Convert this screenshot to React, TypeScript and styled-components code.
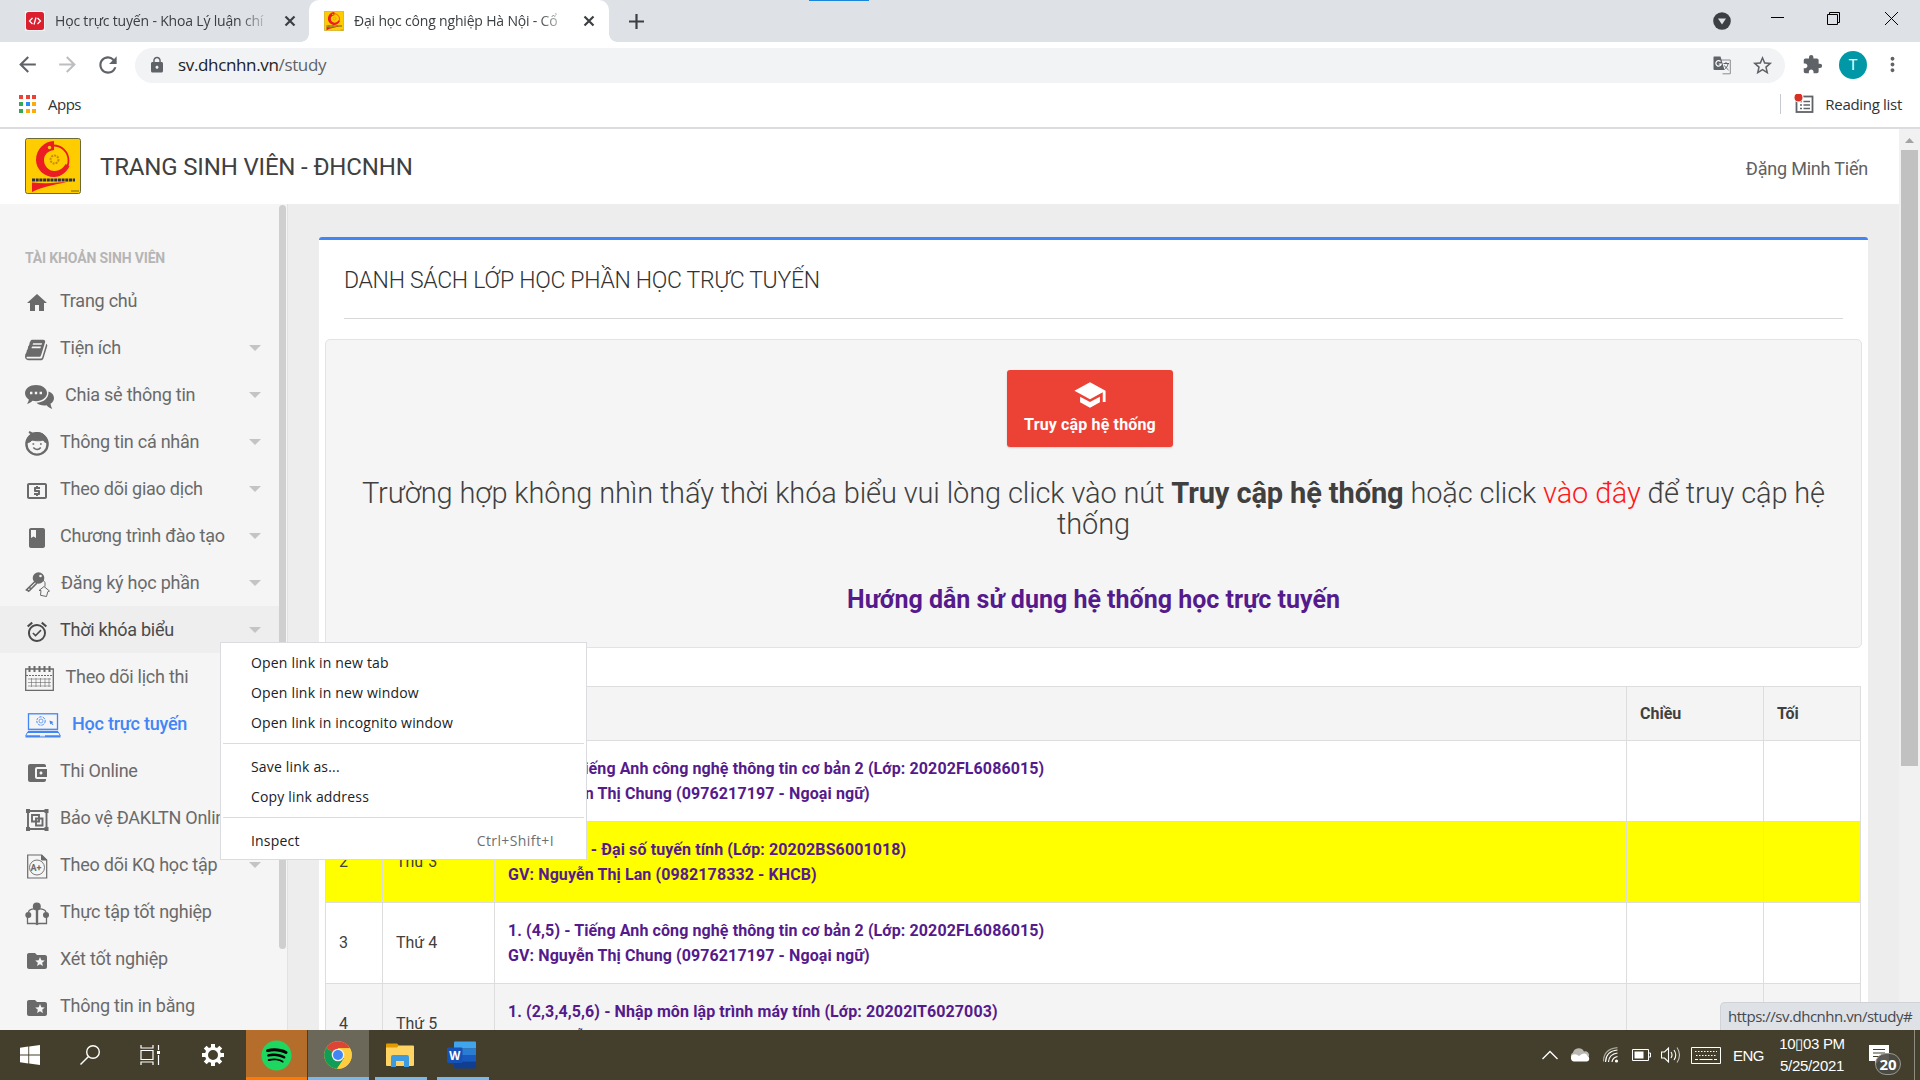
import React from "react";
import styled, { createGlobalStyle } from "styled-components";
import { MdHome, MdLocalAtm, MdBook, MdAlarmOn, MdFolderSpecial, MdSchool, MdExtension, MdStarBorder, MdLock, MdRefresh, MdArrowBack, MdArrowForward, MdMoreVert, MdAccountBalanceWallet } from "react-icons/md";
import { FaSpotify } from "react-icons/fa";

const chromeFont = `"Segoe UI", "Open Sans", "Noto Sans", sans-serif`;
const pageFont = `Roboto, "Noto Sans", sans-serif`;

const GlobalStyle = createGlobalStyle`
  * { box-sizing: border-box; }
  body { margin: 0; overflow: hidden; background: #fff; }
  svg { display: block; flex: none; }
`;

const Screen = styled.div`
  position: relative;
  display: flex;
  flex-direction: column;
  width: 1920px;
  height: 1080px;
  overflow: hidden;
  font-family: ${chromeFont};
  color: #3c4043;
`;

/* ---------- Browser chrome ---------- */
const TabStrip = styled.div`
  display: flex;
  height: 42px;
  flex: none;
  background: #dee1e6;
`;
const Tab = styled.div<{ $active?: boolean; $width: number; $pad: number }>`
  position: relative;
  display: flex;
  align-items: center;
  width: ${(p) => p.$width}px;
  height: 42px;
  padding: 0 0 1px ${(p) => p.$pad}px;
  background: ${(p) => (p.$active ? "#fff" : "transparent")};
  border-radius: 10px 10px 0 0;
  ${(p) =>
    p.$active &&
    `&::before, &::after {
      content: ""; position: absolute; bottom: 0; width: 8px; height: 8px;
    }
    &::before { left: -8px; background: radial-gradient(circle at 0 0, transparent 7.5px, #fff 8px); }
    &::after { right: -8px; background: radial-gradient(circle at 100% 0, transparent 7.5px, #fff 8px); }`}
`;
const TabTitle = styled.span<{ $spacing: number }>`
  width: 219px;
  margin-left: 10px;
  overflow: hidden;
  white-space: nowrap;
  font-size: 14px;
  line-height: 24px;
  letter-spacing: ${(p) => p.$spacing}px;
  mask-image: linear-gradient(90deg, #000 84%, transparent 99%);
`;
const TabClose = styled.div`
  margin-left: 10px;
`;
const NewTab = styled.div`
  display: flex;
  align-items: center;
  margin-left: 20px;
`;
const WindowControls = styled.div`
  display: flex;
  align-items: center;
  margin-left: auto;
  padding: 0 0 5px 0;
`;
const ControlSlot = styled.div<{ $width: number; $drop?: number }>`
  display: flex;
  justify-content: center;
  width: ${(p) => p.$width}px;
  padding-top: ${(p) => p.$drop ?? 0}px;
`;
const Toolbar = styled.div`
  display: flex;
  align-items: center;
  height: 45px;
  flex: none;
  padding: 0 15px 0 15px;
  color: #5f6368;
`;
const NavButton = styled.div<{ $dim?: boolean }>`
  width: 40px;
  color: ${(p) => (p.$dim ? "#bcbec1" : "#5f6368")};
`;
const Omnibox = styled.div`
  display: flex;
  align-items: center;
  width: 1650px;
  height: 35px;
  margin: 1px 0 0 0;
  padding: 0 11px 0 13px;
  border-radius: 18px;
  background: #f1f3f4;
`;
const Url = styled.span`
  flex: 1;
  margin: -2px 0 0 12px;
  color: #5f6368;
  font-size: 17px;
  letter-spacing: -0.35px;
  b { font-weight: 400; color: #202124; }
`;
const OmniIcon = styled.div<{ $gap?: number }>`
  margin-left: ${(p) => p.$gap ?? 18}px;
`;
const Avatar = styled.div`
  display: flex;
  align-items: center;
  justify-content: center;
  width: 28px;
  height: 28px;
  margin: 0 14px 0 16px;
  border-radius: 50%;
  background: #0097a7;
  color: #fff;
  font: 15px ${pageFont};
`;
const BookmarkBar = styled.div`
  display: flex;
  align-items: center;
  height: 42px;
  flex: none;
  padding: 0 18px 6px 19px;
  border-bottom: 2px solid #dadce0;
  font-size: 15px;
`;
const AppsGrid = styled.div`
  display: grid;
  grid-template-columns: repeat(3, 4px);
  gap: 3px 2.5px;
  margin-right: 12px;
`;
const AppDot = styled.i<{ $color: string }>`
  height: 4px;
  background: ${(p) => p.$color};
`;
const BookmarkLabel = styled.span<{ $spacing: number }>`
  margin-top: -1px;
  font-size: 15px;
  letter-spacing: ${(p) => p.$spacing}px;
  color: #303236;
`;
const ReadingList = styled.div`
  display: flex;
  align-items: center;
  gap: 11px;
  height: 20px;
  margin-left: auto;
  padding-left: 13px;
  border-left: 1px solid #c6c9cd;
`;

/* ---------- Web page ---------- */
const Viewport = styled.div`
  display: flex;
  height: 901px;
  flex: none;
  overflow: hidden;
  font-family: ${pageFont};
`;
const Page = styled.div`
  display: flex;
  flex-direction: column;
  width: 1899px;
`;
const Header = styled.header`
  display: flex;
  align-items: center;
  height: 75px;
  flex: none;
  padding: 0 31px 1px 25px;
  background: #fff;
`;
const SiteTitle = styled.h1`
  margin: 2px 0 0 19px;
  font-size: 24px;
  font-weight: 400;
  letter-spacing: -0.16px;
  color: #404040;
`;
const UserName = styled.span`
  margin: 4px 0 0 auto;
  font-size: 18px;
  letter-spacing: -0.2px;
  color: #616161;
`;
const Body = styled.div`
  display: flex;
  flex: 1;
  min-height: 0;
`;
const Sidebar = styled.nav`
  display: flex;
  width: 288px;
  background: #f5f5f5;
  border-right: 1px solid #e2e2e2;
`;
const MenuList = styled.div`
  width: 279px;
  overflow: hidden;
`;
const SideThumb = styled.div`
  width: 7px;
  height: 744px;
  margin-top: 1px;
  border-radius: 4px;
  background: #cfcfcf;
`;
const MenuHeading = styled.div`
  height: 73px;
  padding: 44px 0 0 25px;
  font-size: 14px;
  line-height: 20px;
  font-weight: 700;
  letter-spacing: -0.15px;
  color: #b5b5b5;
`;
const MenuRow = styled.a<{ $hover?: boolean; $current?: boolean }>`
  display: flex;
  align-items: center;
  height: 47px;
  padding-left: 25px;
  white-space: nowrap;
  font-size: 18px;
  letter-spacing: -0.24px;
  font-weight: ${(p) => (p.$current ? 500 : 400)};
  color: ${(p) => (p.$current ? "#4285f4" : p.$hover ? "#4a4a4a" : "#6a6a6a")};
  background: ${(p) => (p.$hover ? "#eeeeee" : "transparent")};
`;
const MenuIcon = styled.span<{ $slot: number }>`
  width: ${(p) => p.$slot + 10}px;
  padding-top: 4px;
`;
const Caret = styled.i`
  margin: 0 18px 0 auto;
  border: 6px solid transparent;
  border-top-color: #c4c4c4;
  border-bottom: 0;
`;
const Content = styled.main`
  flex: 1;
  padding: 33px 31px 0 31px;
  background: #ededed;
`;
const Card = styled.section`
  height: 900px;
  padding: 0 6px;
  background: #fff;
  border-top: 3px solid #4285f4;
  border-radius: 3px 3px 0 0;
`;
const CardTitle = styled.h2`
  height: 79px;
  margin: 0 19px 20px;
  padding-top: 26px;
  border-bottom: 1px solid #d8d8d8;
  font-size: 23px;
  line-height: 30px;
  font-weight: 300;
  letter-spacing: -0.3px;
  color: #333;
`;
const Well = styled.div`
  display: flex;
  flex-direction: column;
  align-items: center;
  height: 309px;
  padding: 30px 20px 0 20px;
  border: 1px solid #e3e3e3;
  border-radius: 5px;
  background: #f5f5f5;
`;
const AccessButton = styled.button`
  display: flex;
  flex-direction: column;
  align-items: center;
  width: 166px;
  height: 77px;
  margin-right: 7px;
  padding: 8px 0 0;
  border: 0;
  border-radius: 3px;
  background: #ec4236;
  box-shadow: 0 1px 2px rgba(0, 0, 0, 0.15);
  color: #fff;
  font: 700 16px/26px ${pageFont};
  letter-spacing: 0.15px;
`;
const Notice = styled.p`
  margin: 31px 0 0;
  font-size: 29px;
  line-height: 31px;
  font-weight: 300;
  text-align: center;
  letter-spacing: -0.12px;
  color: #404040;
  b { font-weight: 700; }
`;
const RedLink = styled.a`
  color: #ff1a1a;
`;
const GuideLink = styled.a`
  margin-top: 43px;
  font-size: 25px;
  line-height: 34px;
  font-weight: 700;
  color: #551a8b;
`;
const Schedule = styled.div`
  display: grid;
  grid-template-columns: 57px 112px 1132px 137px 97px;
  width: 1536px;
  margin-top: 38px;
  border: solid #ddd;
  border-width: 1px 0 0 1px;
`;
const Cell = styled.div<{ $bg: string; $head?: boolean }>`
  display: flex;
  flex-direction: column;
  justify-content: center;
  height: ${(p) => (p.$head ? 54 : 81)}px;
  padding: 0 0 1px 13px;
  border: solid #ddd;
  border-width: 0 1px 1px 0;
  background: ${(p) => p.$bg};
  font-size: 16px;
  line-height: 25px;
  font-weight: ${(p) => (p.$head ? 700 : 400)};
  color: #404040;
`;
const ClassLink = styled.a`
  font-weight: 700;
  letter-spacing: 0.1px;
  color: #551a8b;
  white-space: nowrap;
`;
const ScrollTrack = styled.div`
  display: flex;
  flex-direction: column;
  align-items: center;
  width: 21px;
  padding-top: 9px;
  background: #f1f1f1;
`;
const ScrollThumb = styled.div`
  width: 17px;
  height: 616px;
  margin-top: 7px;
  background: #c1c1c1;
`;

/* ---------- Overlays ---------- */
const ContextMenu = styled.div`
  position: absolute;
  left: 220px;
  top: 642px;
  width: 367px;
  height: 218px;
  padding: 5px 2px 0;
  border: 1px solid #dadce0;
  background: #fff;
`;
const ContextItem = styled.div`
  display: flex;
  justify-content: space-between;
  height: 30px;
  padding: 0 30px 0 28px;
  font-size: 14px;
  line-height: 30px;
  letter-spacing: 0.18px;
  color: #202124;
`;
const Shortcut = styled.span`
  letter-spacing: 0.4px;
  color: #6c6f73;
`;
const Separator = styled.div`
  height: 1px;
  margin: 5px 0 8px;
  background: #dadce0;
`;
const StatusBubble = styled.div`
  position: absolute;
  right: 0;
  top: 1002px;
  width: 200px;
  height: 28px;
  padding-left: 7px;
  border: 1px solid #cfd2d6;
  border-width: 1px 0 0 1px;
  border-radius: 5px 0 0 0;
  background: #dee1e6;
  font-size: 15px;
  line-height: 27px;
  letter-spacing: -0.48px;
  white-space: nowrap;
  color: #45494d;
`;
const ActiveStub = styled.div`
  position: absolute;
  left: 809px;
  top: 0;
  width: 60px;
  height: 1px;
  background: #1a86d9;
`;

/* ---------- Taskbar ---------- */
const Taskbar = styled.footer`
  display: flex;
  height: 50px;
  flex: none;
  background: #443f2c;
  color: #fff;
`;
const TaskButton = styled.div<{ $width: number; $bg?: string; $line?: string; $inset?: number; $nudge?: number }>`
  display: flex;
  align-items: center;
  justify-content: center;
  width: ${(p) => p.$width}px;
  margin-right: ${(p) => (p.$bg ? 1 : 0)}px;
  padding-right: ${(p) => p.$nudge ?? 0}px;
  background: ${(p) =>
    p.$line
      ? `linear-gradient(${p.$line}, ${p.$line}) ${p.$inset ?? 0}px 100% / calc(100% - ${(p.$inset ?? 0) * 2}px) 3px no-repeat ${p.$bg ?? "transparent"}`
      : "transparent"};
`;
const Tray = styled.div`
  display: flex;
  align-items: center;
  margin-left: auto;
  padding-right: 5px;
  font: 15px "Liberation Sans", Arial, sans-serif;
`;
const TrayItem = styled.div<{ $gap: number }>`
  margin-right: ${(p) => p.$gap}px;
`;
const Clock = styled.div`
  width: 70px;
  margin-right: 22px;
  font-size: 15px;
  line-height: 22px;
  text-align: center;
  white-space: nowrap;
  letter-spacing: -0.3px;
`;
const EngLabel = styled.span`
  font-size: 15px;
  letter-spacing: -0.5px;
`;
const ActionCenter = styled.div`
  display: flex;
  width: 46px;
  height: 50px;
  padding-top: 14px;
  border-right: 1px solid #8f8c80;
`;
const SpotifyDisc = styled.div`
  border-radius: 50%;
  background: radial-gradient(circle, #000 60%, transparent 61%);
`;

/* ---------- Drawn icons ---------- */
const Cross = () => (
  <svg width="12" height="12" viewBox="0 0 12 12" stroke="#3c4043" strokeWidth="2.2">
    <path d="M1.5 1.5l9 9M10.5 1.5l-9 9" />
  </svg>
);

const SchoolLogo = ({ w, h }: { w: number; h: number }) => (
  <svg width={w} height={h} viewBox="0 0 56 56" preserveAspectRatio="none">
    <rect x=".5" y=".5" width="55" height="55" rx="2" fill="#fc0" stroke="#6b6b3a" />
    <circle cx="28.500" cy="22.500" r="15" fill="none" stroke="#ec1c24" strokeWidth="1.800" />
    <path d="M29 3C19 3 11 12 11 22c0 9 8 17 18 17 7 0 13-5 15.500-11l-4-2c-2 4-6 7-11 7-6 0-10.500-5-10.500-11 0-5 3.500-9 10-10z" fill="#ec1c24" />
    <circle cx="24.500" cy="9.500" r="1.700" fill="#fc0" />
    <circle cx="29.500" cy="21.500" r="4" fill="none" stroke="#c98a10" strokeWidth="2" strokeDasharray="2 1" />
    <path d="M7 42h43" stroke="#29304a" strokeWidth="2.800" strokeDasharray="3 .7" />
    <path d="M7 44.500c14 1.500 26 .5 39-1.500-12 3-28 5-39 11z" fill="#ec1c24" />
    <path d="M46 53h8" stroke="#7a6a10" />
  </svg>
);

const Translate = () => (
  <svg width="19" height="19" viewBox="0 0 19 19">
    <path d="M8 4h9.300v13.800H9.500" fill="#f1f3f4" stroke="#8b8e92" />
    <path d="M1 .5h6.500l4 13.500H1.500Q.5 14 .5 13V1.500Q.5 .5 1 .5z" fill="#5f6368" />
    <path d="M7.500 5.500A2.700 2.700 0 1 0 8.200 8H5.800" fill="none" stroke="#fff" strokeWidth="1.200" />
    <path d="M10.500 7.500h5.500M13 6v1.500M15 8c-.5 2.500-2 4-3.500 5.500M11.500 9.500c1 2 2.500 3 4 4.500" fill="none" stroke="#5f6368" />
  </svg>
);

const ReadingIcon = () => (
  <svg width="20" height="20" viewBox="0 0 20 20">
    <rect x="2.500" y="2.500" width="16" height="15.500" fill="none" stroke="#5f6368" strokeWidth="1.800" />
    <path d="M6 7.500h2M9.500 7.500H16M6 11h2M9.500 11H16M6 14.500h2M9.500 14.500H16" stroke="#5f6368" strokeWidth="1.600" />
    <circle cx="4.500" cy="3.500" r="5" fill="#fff" />
    <circle cx="4.500" cy="3.500" r="4" fill="#d93025" />
  </svg>
);

const BookIcon = () => (
  <svg width="24" height="24" viewBox="0 0 1792 1792" fill="currentColor">
    <path d="M1639 478q40 57 18 129l-275 906q-19 64-76.500 107.500t-122.500 43.500h-923q-77 0-148.500-53.500t-99.500-131.500q-24-67-2-127 0-4 3-27t4-37q1-8-3-21.500t-3-19.500q2-11 8-21t16.500-23.500 16.500-23.500q23-38 45-91.500t30-91.500q3-10 .5-30t-.5-28q3-11 17-28t17-23q21-36 42-92t25-90q1-9-2.500-32t.5-28q4-13 22-30.500t22-22.500q19-26 42.500-84.500t27.500-96.500q1-8-3-25.500t-2-26.500q2-8 9-18t18-23 17-21q8-12 16.500-30.500t15-35 16-36 19.500-32 26.500-23.500 36-11.500 47.500 5.500l-1 3q38-9 51-9h761q74 0 114 56t18 130l-274 906q-36 119-71.500 153.500t-128.500 34.500h-869q-27 0-38 15-11 16-1 43 24 70 144 70h923q29 0 56-15.500t35-41.500l300-987q7-22 5-57 38 15 59 43zm-1064 2q-4 13 2 22.500t20 9.500h608q13 0 25.500-9.500t16.500-22.500l21-64q4-13-2-22.500t-20-9.500h-608q-13 0-25.500 9.500t-16.500 22.500zm-83 256q-4 13 2 22.500t20 9.500h608q13 0 25.500-9.500t16.500-22.500l21-64q4-13-2-22.500t-20-9.500h-608q-13 0-25.500 9.500t-16.500 22.500z" />
  </svg>
);
const ChatIcon = () => (
  <svg width="29" height="24" viewBox="0 0 29 24" fill="currentColor">
    <path d="M11 0c6 0 11 3.500 11 8s-5 8.200-11 8.200c-1.300 0-2.500-.2-3.600-.5C6 17.500 4 18.500 2 18.800c1-1.200 1.700-2.800 1.800-4.300C1.500 13 0 10.700 0 8.200 0 3.500 5 0 11 0z" />
    <path d="M23.500 6.500c3.300 1.200 5.500 3.500 5.500 6.500 0 2.400-1.300 4.400-3.500 5.800.2 1.700.8 3.500 1.700 5.200-2.200-.7-4.200-2-5.600-3.700-4 .6-8-.4-10.100-2.600C18 17.500 24 13.500 23.500 6.500z" />
    <path d="M5 6.800h2.400v2.400H5zM9.800 6.800h2.400v2.400H9.800zM14.600 6.800H17v2.400h-2.400z" fill="#f5f5f5" />
  </svg>
);
const FaceIcon = () => (
  <svg width="24" height="25" viewBox="0 0 24 25" fill="none" stroke="currentColor">
    <circle cx="12" cy="13" r="10.600" strokeWidth="2.400" />
    <path d="M2 12C2 5 6 1.500 12 1.500S22 5 22 12c-2-.5-3-1.500-4-3-1 1-8 1-11 0-1 1.500-3 2.500-5 3z" fill="currentColor" />
    <path d="M4 1l4 2" strokeWidth="2" />
    <path d="M8.300 16.500c2 2.500 5.500 2.500 7.400 0" strokeWidth="1.500" />
    <path d="M7.500 13h1.700M15 13h1.700" strokeWidth="1.500" />
  </svg>
);
const KeyIcon = () => (
  <svg width="25" height="25" viewBox="0 0 25 25" fill="none" stroke="currentColor">
    <circle cx="13.500" cy="6" r="5.800" fill="currentColor" stroke="none" />
    <circle cx="15.500" cy="4" r="1.300" fill="#f5f5f5" stroke="none" />
    <path d="M10 9.500L.8 18.500M2 17.500l2 2.200M4.500 15.500l2 2M12 11l-8 8" strokeWidth="1.700" />
    <path d="M18 8q3 2 2 6.500M14 18.500l5-4 5.500 4.500-1.700.7-1.300 4.800-6-1.200.5-4.800z" strokeWidth="1" />
  </svg>
);
const CalendarIcon = () => (
  <svg width="29" height="25" viewBox="0 0 29 25" fill="none" stroke="currentColor">
    <path d="M.7 3h27.600v21.300H.7z" strokeWidth="1.300" />
    <path d="M4.500 0v6M9.500 0v6M14.500 0v6M19.500 0v6M24.500 0v6" strokeWidth="2" />
    <path d="M1 9.500h27" strokeDasharray="2 1" />
    <path d="M3 13h23M3 16.500h23M3 20h23M6.500 12v9M11 12v9M15.500 12v9M20 12v9M24 12v9" strokeWidth=".6" />
  </svg>
);
const LaptopIcon = () => (
  <svg width="36" height="25" viewBox="0 0 36 25" fill="none" stroke="currentColor">
    <rect x="3.500" y=".8" width="29" height="15.500" strokeWidth="1.300" />
    <path d="M3 18.800h30M.5 23.300h35" strokeWidth="2.200" />
    <path d="M3 18.500L.8 22.500M33 18.500l2.200 4" />
    <circle cx="16" cy="8" r="4.200" strokeWidth="1" strokeDasharray="2.500 1" />
    <circle cx="16" cy="8" r="2" strokeWidth=".7" />
    <path d="M24.500 7.500l4 1.500-1.500 1 1.500 1.500-1 .5-1.500-1.500-.8 1z" fill="currentColor" stroke="none" />
    <path d="M15 22.800h5" stroke="#f5f5f5" strokeWidth="1.200" />
  </svg>
);
const GroupIcon = () => (
  <svg width="24" height="24" viewBox="0 0 24 24" fill="none" stroke="currentColor" strokeWidth="1.900">
    <path d="M3 3h18.500v18H3z" />
    <path d="M7 7h7v6.500H7zM11 10.500h6.500v7H11z" />
    <path d="M1 1h4v4H1zM19.500 1h4v4h-4zM1 19h4v4H1zM19.500 19h4v4h-4z" fill="currentColor" stroke="none" />
  </svg>
);
const GradeIcon = () => (
  <svg width="24" height="25" viewBox="0 0 24 25" fill="none" stroke="currentColor">
    <path d="M2.700 1h14l5 5v18h-19z" strokeWidth="1.200" />
    <path d="M16.500 1v5h5z" fill="currentColor" />
    <circle cx="12" cy="13.500" r="7.500" strokeWidth=".9" />
    <text x="5.500" y="16.600" fontSize="9" fontWeight="700" letterSpacing="0" fontFamily="Roboto, sans-serif" fill="currentColor" stroke="none">A+</text>
  </svg>
);
const InternIcon = () => (
  <svg width="25" height="24" viewBox="0 0 25 24" fill="none" stroke="currentColor" strokeWidth="1.300">
    <circle cx="11.800" cy="4.500" r="4" fill="currentColor" stroke="none" />
    <circle cx="3.300" cy="13" r="3" fill="currentColor" stroke="none" />
    <circle cx="21" cy="13" r="3" fill="currentColor" stroke="none" />
    <path d="M2.500 12v9.500h7.500l2 1 2-1h7.500V12M3.500 10q1-4 8.500-3 7.500-1 9 3" />
    <path d="M12 8v14" strokeWidth="2.400" />
  </svg>
);
const GearIcon = () => (
  <svg width="22" height="22" viewBox="0 0 22 22" fill="none" stroke="#fff">
    <circle cx="11" cy="11" r="6.500" strokeWidth="3" />
    <path d="M11 0v4M11 18v4M0 11h4M18 11h4M3.200 3.200l2.800 2.800M16 16l2.800 2.800M18.800 3.200L16 6M6 16l-2.800 2.800" strokeWidth="4" />
  </svg>
);

const ChromeLogo = () => (
  <svg width="28" height="28" viewBox="0 0 28 28">
    <circle cx="14" cy="14" r="13.800" fill="#fc3" />
    <path d="M14 14L2.050 7.100A13.800 13.800 0 0 1 26 7.300H14z" fill="#db4437" />
    <path d="M14 14L2.050 7.100A13.800 13.800 0 0 0 13 27.800L20 17.500z" fill="#0f9d58" />
    <path d="M26 7.300A13.800 13.800 0 0 1 13 27.800L20 17.200 14 7.300z" fill="#ffcd40" />
    <circle cx="14" cy="14" r="6.300" fill="#f1f1f1" />
    <circle cx="14" cy="14" r="5" fill="#4285f4" />
  </svg>
);
const ExplorerLogo = () => (
  <svg width="28" height="24" viewBox="0 0 28 24">
    <path d="M0 1.500Q0 .5 1 .5h10l2.500 2.500v3H0z" fill="#e19b00" />
    <path d="M0 4.500h11l2-2h14q1 0 1 1V22q0 1-1 1H1q-1 0-1-1z" fill="#ffd463" />
    <path d="M5 24V14q0-2 2-2h14q2 0 2 2v10h-5v-6h-8v6z" fill="#3f9be0" />
  </svg>
);
const WordLogo = () => (
  <svg width="30" height="28" viewBox="0 0 30 28">
    <path d="M8 .5h20q1 0 1 1V7.500H7V1.500Q7 .5 8 .5z" fill="#41a5ee" />
    <path d="M7 7.300h22v6.800H7z" fill="#2b7cd3" />
    <path d="M7 14h22v6.800H7z" fill="#185abd" />
    <path d="M7 20.700h22v5.800q0 1-1 1H8q-1 0-1-1z" fill="#103f91" />
    <rect x="0" y="6.500" width="15.500" height="15.500" rx="1.200" fill="#1651b5" />
    <text x="7.700" y="18.500" textAnchor="middle" fontSize="11.500" fontWeight="700" fontFamily="Open Sans, sans-serif" fill="#fff">W</text>
  </svg>
);

/* ---------- Data ---------- */
type Item = { label: string; icon: React.ReactNode; slot?: number; caret?: boolean; hover?: boolean; current?: boolean };
const menu: Item[] = [
  { label: "Trang chủ", icon: <MdHome size={24} /> },
  { label: "Tiện ích", icon: <BookIcon />, caret: true },
  { label: "Chia sẻ thông tin", icon: <ChatIcon />, slot: 30, caret: true },
  { label: "Thông tin cá nhân", icon: <FaceIcon />, caret: true },
  { label: "Theo dõi giao dịch", icon: <MdLocalAtm size={24} />, caret: true },
  { label: "Chương trình đào tạo", icon: <MdBook size={24} />, caret: true },
  { label: "Đăng ký học phần", icon: <KeyIcon />, slot: 26, caret: true },
  { label: "Thời khóa biểu", icon: <MdAlarmOn size={24} />, caret: true, hover: true },
  { label: "Theo dõi lịch thi", icon: <CalendarIcon />, slot: 30.5 },
  { label: "Học trực tuyến", icon: <LaptopIcon />, slot: 37, current: true },
  { label: "Thi Online", icon: <MdAccountBalanceWallet size={24} /> },
  { label: "Bảo vệ ĐAKLTN Online", icon: <GroupIcon /> },
  { label: "Theo dõi KQ học tập", icon: <GradeIcon />, caret: true },
  { label: "Thực tập tốt nghiệp", icon: <InternIcon /> },
  { label: "Xét tốt nghiệp", icon: <MdFolderSpecial size={24} /> },
  { label: "Thông tin in bằng", icon: <MdFolderSpecial size={24} /> },
];
const rows = [
  { n: "1", day: "Thứ 2", bg: "#fff", lines: ["1. (4,5) - Tiếng Anh công nghệ thông tin cơ bản 2 (Lớp: 20202FL6086015)", "GV: Nguyễn Thị Chung (0976217197 - Ngoại ngữ)"] },
  { n: "2", day: "Thứ 3", bg: "#ff0", lines: ["1. (1,2,3,4) - Đại số tuyến tính (Lớp: 20202BS6001018)", "GV: Nguyễn Thị Lan (0982178332 - KHCB)"] },
  { n: "3", day: "Thứ 4", bg: "#fff", lines: ["1. (4,5) - Tiếng Anh công nghệ thông tin cơ bản 2 (Lớp: 20202FL6086015)", "GV: Nguyễn Thị Chung (0976217197 - Ngoại ngữ)"] },
  { n: "4", day: "Thứ 5", bg: "#f4f4f4", lines: ["1. (2,3,4,5,6) - Nhập môn lập trình máy tính (Lớp: 20202IT6027003)", "GV: Nguyễn"] },
];
const dots = ["#ea4335", "#ea4335", "#ea4335", "#34a853", "#2a8bf2", "#fbab0b", "#34a853", "#fbab0b", "#fbab0b"];

export default function App() {
  return (
    <Screen>
      <GlobalStyle />
      <TabStrip>
        <Tab $width={309} $pad={25}>
          <svg width="20" height="20" viewBox="0 0 20 20">
            <rect width="20" height="20" fill="#f3f3f3" />
            <rect x="1" y="1" width="18" height="18" rx="2.500" fill="#dc1f2e" />
            <path d="M7.500 7l-3 3 3 3M12.500 7l3 3-3 3M11 6.500L9 13.500" fill="none" stroke="#fff" strokeWidth="1.300" />
          </svg>
          <TabTitle $spacing={-0.18}>Học trực tuyến - Khoa Lý luận chí</TabTitle>
          <TabClose><Cross /></TabClose>
        </Tab>
        <Tab $active $width={300} $pad={15}>
          <SchoolLogo w={20} h={20} />
          <TabTitle $spacing={-0.18}>Đại học công nghiệp Hà Nội - Cổ</TabTitle>
          <TabClose><Cross /></TabClose>
        </Tab>
        <NewTab>
          <svg width="15" height="15" viewBox="0 0 15 15" stroke="#3c4043" strokeWidth="2.200"><path d="M7.500 0v15M0 7.500h15" /></svg>
        </NewTab>
        <WindowControls>
          <ControlSlot $width={55} $drop={5}>
            <svg width="18" height="18" viewBox="0 0 18 18"><circle cx="9" cy="9" r="8.800" fill="#3c4043" /><path d="M5 6.500h8l-4 6z" fill="#dee1e6" /></svg>
          </ControlSlot>
          <ControlSlot $width={56}>
            <svg width="13" height="13" viewBox="0 0 13 13" stroke="#000"><path d="M0 5.500h13" /></svg>
          </ControlSlot>
          <ControlSlot $width={57}>
            <svg width="13" height="13" viewBox="0 0 13 13" fill="none" stroke="#000"><path d="M.5 2.500h10v10H.5zM2.500 2.500v-2h10v10h-2" /></svg>
          </ControlSlot>
          <ControlSlot $width={58}>
            <svg width="13" height="13" viewBox="0 0 13 13" stroke="#000"><path d="M0 0l13 13M13 0L0 13" /></svg>
          </ControlSlot>
        </WindowControls>
      </TabStrip>
      <Toolbar>
        <NavButton><MdArrowBack size={25} /></NavButton>
        <NavButton $dim><MdArrowForward size={25} /></NavButton>
        <NavButton><MdRefresh size={26} /></NavButton>
        <Omnibox>
          <MdLock size={18} />
          <Url><b>sv.dhcnhn.vn</b>/study</Url>
          <OmniIcon><Translate /></OmniIcon>
          <OmniIcon $gap={19}><MdStarBorder size={23} /></OmniIcon>
        </Omnibox>
        <OmniIcon $gap={17}><MdExtension size={21} /></OmniIcon>
        <Avatar>T</Avatar>
        <MdMoreVert size={23} />
      </Toolbar>
      <BookmarkBar>
        <AppsGrid>{dots.map((c, i) => <AppDot key={i} $color={c} />)}</AppsGrid>
        <BookmarkLabel $spacing={-0.5}>Apps</BookmarkLabel>
        <ReadingList>
          <ReadingIcon />
          <BookmarkLabel $spacing={-0.3}>Reading list</BookmarkLabel>
        </ReadingList>
      </BookmarkBar>

      <Viewport>
        <Page>
          <Header>
            <SchoolLogo w={56} h={56} />
            <SiteTitle>TRANG SINH VIÊN - ĐHCNHN</SiteTitle>
            <UserName>Đặng Minh Tiến</UserName>
          </Header>
          <Body>
            <Sidebar>
              <MenuList>
                <MenuHeading>TÀI KHOẢN SINH VIÊN</MenuHeading>
                {menu.map((m) => (
                  <MenuRow key={m.label} $hover={m.hover} $current={m.current}>
                    <MenuIcon $slot={m.slot ?? 25}>{m.icon}</MenuIcon>
                    {m.label}
                    {m.caret && <Caret />}
                  </MenuRow>
                ))}
              </MenuList>
              <SideThumb />
            </Sidebar>
            <Content>
              <Card>
                <CardTitle>DANH SÁCH LỚP HỌC PHẦN HỌC TRỰC TUYẾN</CardTitle>
                <Well>
                  <AccessButton><MdSchool size={34} />Truy cập hệ thống</AccessButton>
                  <Notice>
                    Trường hợp không nhìn thấy thời khóa biểu vui lòng click vào nút <b>Truy cập hệ thống</b> hoặc click{" "}
                    <RedLink>vào đây</RedLink> để truy cập hệ thống
                  </Notice>
                  <GuideLink>Hướng dẫn sử dụng hệ thống học trực tuyến</GuideLink>
                </Well>
                <Schedule>
                  {["STT", "Thứ", "Sáng", "Chiều", "Tối"].map((h) => <Cell key={h} $head $bg="#f4f4f4">{h}</Cell>)}
                  {rows.map((r) => (
                    <React.Fragment key={r.n}>
                      <Cell $bg={r.bg}>{r.n}</Cell>
                      <Cell $bg={r.bg}>{r.day}</Cell>
                      <Cell $bg={r.bg}>{r.lines.map((l) => <ClassLink key={l}>{l}</ClassLink>)}</Cell>
                      <Cell $bg={r.bg} />
                      <Cell $bg={r.bg} />
                    </React.Fragment>
                  ))}
                </Schedule>
              </Card>
            </Content>
          </Body>
        </Page>
        <ScrollTrack>
          <svg width="9" height="5" viewBox="0 0 9 5" fill="#a3a3a3"><path d="M4.500 0L9 5H0z" /></svg>
          <ScrollThumb />
        </ScrollTrack>
      </Viewport>

      <Taskbar>
        <TaskButton $width={60}>
          <svg width="20" height="20" viewBox="0 0 20 20" fill="#fff"><path d="M0 2.700L8.300 1.500v8H0zM9.200 1.400L20 0v9.500H9.200zM0 10.400h8.300v8L0 17.300zM9.200 10.400H20V20L9.200 18.500z" /></svg>
        </TaskButton>
        <TaskButton $width={60}>
          <svg width="20" height="20" viewBox="0 0 20 20" fill="none" stroke="#fff" strokeWidth="1.400"><circle cx="13" cy="7" r="6.300" /><path d="M8.500 11.500L.5 19.500" /></svg>
        </TaskButton>
        <TaskButton $width={60}>
          <svg width="21" height="20" viewBox="0 0 21 20" fill="none" stroke="#fff" strokeWidth="1.200"><path d="M1 5.500h12v9H1zM1 0v3h12V0M1 20v-3h12v3M18.500 0v5M18.500 10v10" /><path d="M17 6h3v3h-3z" fill="#fff" stroke="none" /></svg>
        </TaskButton>
        <TaskButton $width={66}><GearIcon /></TaskButton>
        <TaskButton $width={61} $bg="#b56d2c" $line="#ff7800">
          <SpotifyDisc><FaSpotify size={31} color="#1ed760" /></SpotifyDisc>
        </TaskButton>
        <TaskButton $width={61} $bg="#6b6859" $line="#76b9ed" $nudge={2}><ChromeLogo /></TaskButton>
        <TaskButton $width={62} $line="#76b9ed" $inset={5} $nudge={3}><ExplorerLogo /></TaskButton>
        <TaskButton $width={62} $line="#76b9ed" $inset={5} $nudge={3}><WordLogo /></TaskButton>
        <Tray>
          <TrayItem $gap={12}><svg width="16" height="10" viewBox="0 0 16 10" fill="none" stroke="#fff" strokeWidth="1.300"><path d="M.5 9L8 1.500 15.500 9" /></svg></TrayItem>
          <TrayItem $gap={13}>
            <svg width="20" height="14" viewBox="0 0 20 14">
              <path d="M4 12a4 4 0 0 1-1-7.500A6 6 0 0 1 14 3.500a4 4 0 0 1 5 5L12 12z" fill="#b9b7b0" />
              <path d="M4 13.500a3.600 3.600 0 0 1-.5-7q3-.8 5.500 1.500l3-2q4-1.500 5.500 2a2.900 2.900 0 0 1-.5 5.500z" fill="#fff" />
            </svg>
          </TrayItem>
          <TrayItem $gap={13}>
            <svg width="16" height="16" viewBox="0 0 16 16" fill="none" stroke="#fff" strokeWidth="1.200">
              <path d="M9 15q.5-4.500 5.500-5.500M5.500 15q.5-8 9-9M2.500 15Q3 4 14.500 3" /><path d="M.5 14.500Q.5 2 14.500.7" stroke="#aaa79c" /><circle cx="13.500" cy="14" r="1.600" fill="#fff" stroke="none" />
            </svg>
          </TrayItem>
          <TrayItem $gap={10}><svg width="19" height="12" viewBox="0 0 19 12" fill="none" stroke="#fff"><path d="M.5 .5h16v11H.5zM17 4h1.500v4H17" /><path d="M2.500 2.500h9v7h-9z" fill="#fff" stroke="none" /></svg></TrayItem>
          <TrayItem $gap={10}>
            <svg width="20" height="18" viewBox="0 0 20 18" fill="none" stroke="#fff" strokeWidth="1.100"><path d="M.5 6h3l4-4v14l-4-4h-3zM10 6q2 3 0 6M13 4q3.500 5 0 10" /><path d="M16 1.500q5 7.500 0 15" stroke="#c5c3bb" /></svg>
          </TrayItem>
          <TrayItem $gap={12}>
            <svg width="30" height="17" viewBox="0 0 30 17" fill="none" stroke="#fff"><path d="M.5 .5h29v16H.5z" /><path d="M4 4.500h22M5 8.500h21" strokeDasharray="1.500 1.500" strokeWidth="1.200" /><path d="M4 12.500h3M8.500 12.500h13M23 12.500h3" strokeWidth="1.200" /></svg>
          </TrayItem>
          <TrayItem $gap={13}><EngLabel>ENG</EngLabel></TrayItem>
          <Clock>10▯03 PM<br />5/25/2021</Clock>
          <ActionCenter>
            <svg width="34" height="32" viewBox="0 0 34 32">
              <path d="M0 1h20v16H10l-4 4v-4H0z" fill="#fff" />
              <path d="M4 5.500h12M4 9h12M4 12.500h8" stroke="#443f2c" strokeWidth="1.200" />
              <rect x="6.500" y="9.500" width="25" height="21" rx="10.500" fill="#4b4a45" fillOpacity=".9" stroke="#9a9890" />
              <text x="19" y="25.500" textAnchor="middle" fontSize="15" fontWeight="700" fontFamily="Open Sans, sans-serif" fill="#fff">20</text>
            </svg>
          </ActionCenter>
        </Tray>
      </Taskbar>

      <ContextMenu>
        <ContextItem>Open link in new tab</ContextItem>
        <ContextItem>Open link in new window</ContextItem>
        <ContextItem>Open link in incognito window</ContextItem>
        <Separator />
        <ContextItem>Save link as...</ContextItem>
        <ContextItem>Copy link address</ContextItem>
        <Separator />
        <ContextItem>Inspect<Shortcut>Ctrl+Shift+I</Shortcut></ContextItem>
      </ContextMenu>
      <StatusBubble>https://sv.dhcnhn.vn/study#</StatusBubble>
      <ActiveStub />
    </Screen>
  );
}
